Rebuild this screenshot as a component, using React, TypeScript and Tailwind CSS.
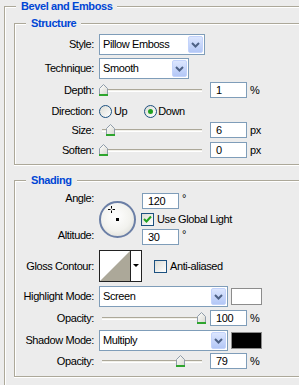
import React from 'react';

function Chevron() {
    return (
        <svg width="9" height="6" viewBox="0 0 9 6">
            <path d="M1 1 L4.5 4.5 L8 1" fill="none" stroke="#4d6185" strokeWidth="2" />
        </svg>
    );
}

function Select({ value, width }: { value: string; width: string }) {
    return (
        <div className={`flex items-center h-[21px] border border-[#7f9db9] bg-white ${width}`}>
            <span className="flex-1 pl-[3px] leading-[19px] text-black">{value}</span>
            <div className="w-[15px] h-[17px] mr-[1px] rounded-[2px] border border-[#c3d3fb] bg-gradient-to-b from-[#dce6fe] to-[#b3c7f6] flex items-center justify-center">
                <Chevron />
            </div>
        </div>
    );
}

function NumInput({ value }: { value: string }) {
    return (
        <div className="w-[37px] h-[16px] border border-[#7f9db9] bg-white pl-[5px] leading-[14px] text-black">
            {value}
        </div>
    );
}

function Thumb({ left }: { left: number }) {
    return (
        <svg width="9" height="12" viewBox="0 0 9 12" className="absolute top-[2px]" style={{ left }}>
            <defs>
                <linearGradient id="thumbFill" x1="0" y1="0" x2="1" y2="1">
                    <stop offset="0" stopColor="#ffffff" />
                    <stop offset="1" stopColor="#d8d8d0" />
                </linearGradient>
            </defs>
            <path d="M0.5 4.5 L4.5 0.5 L8.5 4.5 L8.5 10.5 L0.5 10.5 Z" fill="url(#thumbFill)" stroke="#8f9caa" />
            <rect x="0" y="10" width="9" height="2" fill="#2ea52e" />
        </svg>
    );
}

function Slider({ pos }: { pos: number }) {
    return (
        <div className="relative w-[103px] h-[16px]">
            <div className="absolute left-[3px] right-0 top-[7px] h-[3px] border-t border-[#aca899] border-b border-b-white bg-[#f1f0ea]" />
            <Thumb left={pos} />
        </div>
    );
}

function Radio({ checked }: { checked?: boolean }) {
    return (
        <div className="w-[13px] h-[13px] rounded-full border border-[#1c5180] bg-gradient-to-br from-[#dcdcd5] to-white flex items-center justify-center">
            {checked && <div className="w-[5px] h-[5px] rounded-full bg-[#21a121]" />}
        </div>
    );
}

function Checkbox({ checked }: { checked?: boolean }) {
    return (
        <div className="w-[13px] h-[13px] border border-[#1c5180] bg-gradient-to-br from-[#dcdcd5] to-white flex items-center justify-center">
            {checked && (
                <svg width="9" height="9" viewBox="0 0 9 9">
                    <path d="M1 4 L3.5 6.5 L8 1.5" fill="none" stroke="#21a121" strokeWidth="2" />
                </svg>
            )}
        </div>
    );
}

function Label({ children }: { children: React.ReactNode }) {
    return <span className="w-[79px] text-right text-black shrink-0">{children}</span>;
}

function Legend({ children }: { children: React.ReactNode }) {
    return (
        <span className="absolute -top-[7px] left-[11px] px-[5px] bg-[#ececec] leading-[13px] font-bold text-[#0046d5]">
            {children}
        </span>
    );
}

function SliderRow({ label, value, unit, pos }: { label: string; value: string; unit: string; pos: number }) {
    return (
        <div className="flex items-center h-[16px]">
            <Label>{label}</Label>
            <div className="ml-[5px]">
                <Slider pos={pos} />
            </div>
            <div className="ml-[8px]">
                <NumInput value={value} />
            </div>
            <span className="ml-[3px] text-black">{unit}</span>
        </div>
    );
}

export default function App() {
    return (
        <div className="w-[299px] h-[385px] overflow-hidden bg-[#ececec] pl-[4px] pt-[6px] font-['Liberation_Sans',Arial,sans-serif] text-[11px] tracking-[-0.4px]">
            {/* Bevel and Emboss group */}
            <div className="relative w-[320px] h-[400px] border-l border-t border-[#aca899] shadow-[inset_1px_1px_0_#fff] pl-[9px] pt-[16px]">
                <Legend>Bevel and Emboss</Legend>

                {/* Structure */}
                <div className="relative w-[300px] border-l border-t border-b border-[#aca899] shadow-[inset_1px_1px_0_#fff,0_1px_0_#fff] pt-[10px] pb-[6px]">
                    <Legend>Structure</Legend>
                    <div className="flex items-center h-[21px]">
                        <Label>Style:</Label>
                        <div className="ml-[5px]">
                            <Select value="Pillow Emboss" width="w-[106px]" />
                        </div>
                    </div>
                    <div className="flex items-center h-[21px] mt-[3px]">
                        <Label>Technique:</Label>
                        <div className="ml-[5px]">
                            <Select value="Smooth" width="w-[90px]" />
                        </div>
                    </div>
                    <div className="mt-[3px]">
                        <SliderRow label="Depth:" value="1" unit="%" pos={0} />
                    </div>
                    <div className="flex items-center h-[16px] mt-[5px]">
                        <Label>Direction:</Label>
                        <div className="ml-[5px] flex items-center">
                            <Radio />
                            <span className="ml-[2px] text-black">Up</span>
                            <div className="ml-[17px]">
                                <Radio checked />
                            </div>
                            <span className="ml-[1px] text-black">Down</span>
                        </div>
                    </div>
                    <div className="mt-[3px]">
                        <SliderRow label="Size:" value="6" unit="px" pos={7} />
                    </div>
                    <div className="mt-[4px]">
                        <SliderRow label="Soften:" value="0" unit="px" pos={0} />
                    </div>
                </div>

                {/* Shading */}
                <div className="relative mt-[15px] w-[300px] border-l border-t border-b border-[#aca899] shadow-[inset_1px_1px_0_#fff,0_1px_0_#fff] pt-[12px] pb-[7px]">
                    <Legend>Shading</Legend>
                    <div className="flex">
                        <div className="w-[79px] flex flex-col items-end text-black">
                            <span className="-mt-[3px] h-[16px] leading-[16px]">Angle:</span>
                            <span className="mt-[21px] h-[16px] leading-[16px]">Altitude:</span>
                        </div>
                        <div className="ml-[5px] mt-[8px]">
                            <div className="relative w-[37px] h-[37px] rounded-full border-2 border-[#6b7fa6] bg-[radial-gradient(circle_at_45%_40%,#ffffff_0%,#f2f2ee_55%,#d6d6ce_100%)]">
                                <svg width="7" height="7" viewBox="0 0 7 7" className="absolute left-[7px] top-[3px]">
                                    <path d="M3.5 0 V2.5 M3.5 4.5 V7 M0 3.5 H2.5 M4.5 3.5 H7" stroke="#000" strokeWidth="1" />
                                </svg>
                                <div className="absolute left-[15px] top-[15px] w-[3px] h-[3px] bg-black" />
                            </div>
                        </div>
                        <div className="ml-[5px] flex flex-col">
                            <div className="flex items-center h-[16px] ml-[1px]">
                                <NumInput value="120" />
                                <span className="ml-[3px] -mt-[6px] text-black">°</span>
                            </div>
                            <div className="flex items-center h-[13px] mt-[4px]">
                                <Checkbox checked />
                                <span className="ml-[3px] text-black">Use Global Light</span>
                            </div>
                            <div className="flex items-center h-[16px] mt-[3px] ml-[1px]">
                                <NumInput value="30" />
                                <span className="ml-[3px] -mt-[6px] text-black">°</span>
                            </div>
                        </div>
                    </div>

                    <div className="flex items-center h-[32px] mt-[5px]">
                        <Label>Gloss Contour:</Label>
                        <div className="ml-[5px]">
                            <svg width="43" height="32" viewBox="0 0 43 32">
                                <rect x="0.5" y="0.5" width="42" height="31" fill="#ffffff" stroke="#222" />
                                <polygon points="1,31 31,1 31,31" fill="#aca899" />
                                <line x1="31.5" y1="0" x2="31.5" y2="32" stroke="#222" />
                                <polygon points="34,14 40,14 37,17" fill="#000" />
                            </svg>
                        </div>
                        <div className="ml-[12px]">
                            <Checkbox />
                        </div>
                        <span className="ml-[3px] text-black">Anti-aliased</span>
                    </div>

                    <div className="flex items-center h-[21px] mt-[4px]">
                        <Label>Highlight Mode:</Label>
                        <div className="ml-[5px]">
                            <Select value="Screen" width="w-[129px]" />
                        </div>
                        <div className="ml-[3px] w-[31px] h-[17px] border border-[#8c8c8c] bg-white" />
                    </div>
                    <div className="mt-[3px]">
                        <SliderRow label="Opacity:" value="100" unit="%" pos={98} />
                    </div>
                    <div className="flex items-center h-[21px] mt-[4px]">
                        <Label>Shadow Mode:</Label>
                        <div className="ml-[5px]">
                            <Select value="Multiply" width="w-[129px]" />
                        </div>
                        <div className="ml-[3px] w-[31px] h-[17px] border border-[#8c8c8c] bg-black" />
                    </div>
                    <div className="mt-[2px]">
                        <SliderRow label="Opacity:" value="79" unit="%" pos={77} />
                    </div>
                </div>
            </div>
        </div>
    );
}
